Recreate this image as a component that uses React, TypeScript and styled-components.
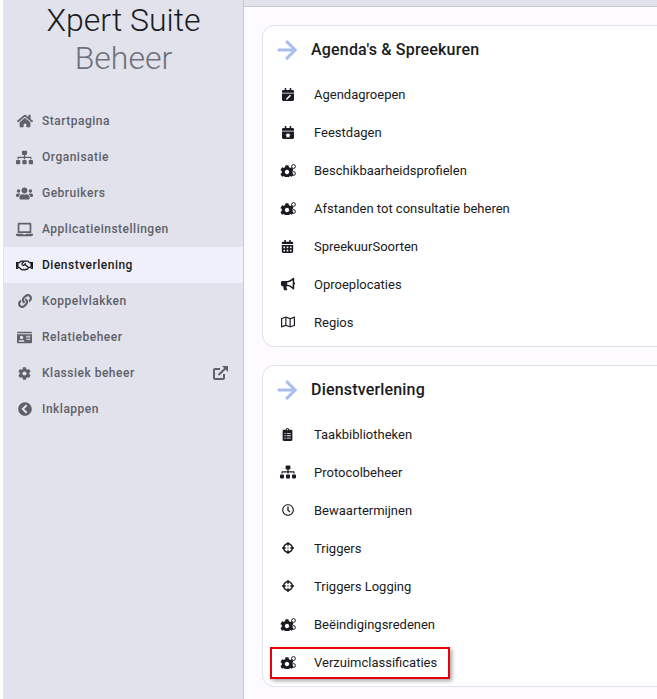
import React from 'react';
import styled, { createGlobalStyle } from 'styled-components';
import {
  FaHome, FaSitemap, FaUsers, FaLaptop, FaRegHandshake, FaLink, FaIdCard, FaCog,
  FaChevronCircleLeft, FaCalendarAlt, FaBullhorn, FaRegMap, FaClipboardList, FaRegClock, FaCrosshairs,
} from 'react-icons/fa';
import { ArrowRight } from 'lucide-react';

const Global = createGlobalStyle`
  html, body { margin: 0; padding: 0; height: 100%; background: #fff; }
  body { font-family: Roboto, "Liberation Sans", sans-serif; overflow: hidden; }
  #root { height: 100%; }
`;

const Page = styled.div`
  display: flex;
  width: 657px;
  height: 699px;
  padding-left: 3px;
  box-sizing: border-box;
  overflow: hidden;
`;

const Sidebar = styled.aside`
  width: 241px;
  flex: none;
  box-sizing: border-box;
  background: #e1e2ec;
  border-right: 1px solid #c8c9d3;
  padding-left: 1px;
`;

const Brand = styled.div`
  height: 103px;
  box-sizing: border-box;
  padding-top: 1px;
  display: flex;
  flex-direction: column;
  align-items: center;
  font-size: 32px;
  line-height: 38px;
  font-weight: 300;
  color: #1a1b22;
`;

const BrandSub = styled.span`
  color: #6f7079;
`;

const Nav = styled.nav`
  display: flex;
  flex-direction: column;
`;

const NavItem = styled.div<{ $active?: boolean }>`
  height: 36px;
  display: flex;
  align-items: center;
  padding: 0 15px 0 12px;
  gap: 9px;
  font-size: 12px;
  font-weight: 500;
  letter-spacing: 0.5px;
  color: ${(p) => (p.$active ? '#1a1b22' : '#5f6068')};
  background: ${(p) => (p.$active ? '#eff0fb' : 'transparent')};
`;

const NavIcon = styled.span<{ $size: number }>`
  width: 17px;
  flex: none;
  display: flex;
  justify-content: center;
  font-size: ${(p) => p.$size}px;
`;

const NavLabel = styled.span`
  flex: 1;
`;

const Main = styled.main`
  flex: 1;
  min-width: 0;
  display: flex;
  flex-direction: column;
  background: #fdfbff;
  overflow: hidden;
`;

const TopBar = styled.div`
  height: 6px;
  flex: none;
  background: #e1e2ec;
  border-bottom: 1px solid #c8c9d3;
`;

const Content = styled.div`
  display: flex;
  flex-direction: column;
  gap: 18px;
  padding: 18px 0 0 18px;
`;

const Card = styled.section`
  width: 440px;
  height: 322px;
  flex: none;
  box-sizing: border-box;
  background: #fff;
  border: 1px solid #e1e2ec;
  border-radius: 12px;
`;

const CardHeader = styled.header`
  height: 47px;
  margin-bottom: 2px;
  display: flex;
  align-items: center;
  gap: 10px;
  padding-left: 10px;
  font-size: 16px;
  font-weight: 500;
  letter-spacing: 0.18px;
  color: #1a1b22;
`;

const Arrow = styled(ArrowRight)`
  color: #a9bff0;
  flex: none;
`;

const Row = styled.div`
  position: relative;
  height: 38px;
  display: flex;
  align-items: center;
  padding-left: 16px;
  font-size: 13px;
  color: #1a1b22;
`;

const RowIcon = styled.span<{ $size: number }>`
  width: 17px;
  flex: none;
  display: flex;
  justify-content: center;
  font-size: ${(p) => p.$size}px;
  margin-right: 18px;
`;

const Highlight = styled.span`
  position: absolute;
  left: 7px;
  top: 4px;
  width: 180px;
  height: 32px;
  box-sizing: border-box;
  border: 2px solid #e8000b;
  box-shadow: 2px 2px 4px rgba(0, 0, 0, 0.35);
  pointer-events: none;
`;

const ExternalIcon = () => (
  <svg width="15" height="14" viewBox="0 0 15 14" fill="none" stroke="currentColor">
    <path d="M7 3H2C1.4 3 1 3.4 1 4v8c0 .6.4 1 1 1h8c.6 0 1-.4 1-1V8" strokeWidth="2" />
    <path d="M5.5 9 13 1.8" strokeWidth="2" />
    <path d="M9 0h6v6z" fill="currentColor" stroke="none" />
  </svg>
);

const CalendarGlyph = ({ mark }: { mark: 'edit' | 'star' }) => (
  <svg width="12" height="13" viewBox="0 0 13 14" fill="currentColor">
    <path d="M3 0h1.6v2h3.8V0H10v2h1.5C12.3 2 13 2.7 13 3.5V5H0V3.5C0 2.7.7 2 1.5 2H3zM0 6h13v6.5c0 .8-.7 1.5-1.5 1.5h-10C.7 14 0 13.3 0 12.5z" />
    {mark === 'edit' ? (
      <path d="M8.6 7.2l1.2 1.2-4 4-1.6.4.4-1.6z" fill="#fff" />
    ) : (
      <path d="M6.5 7.2l.9 1.8 2 .3-1.45 1.4.35 2-1.8-.95-1.8.95.35-2L3.6 9.3l2-.3z" fill="#fff" />
    )}
  </svg>
);

const GearsGlyph = () => (
  <svg width="16" height="14" viewBox="0 0 16 14" fill="none" stroke="currentColor">
    <FaCog x={0} y={2} width={10} height={10} fill="currentColor" stroke="none" />
    <circle cx="13.5" cy="3.5" r="1.9" strokeWidth="1" />
    <circle cx="13.5" cy="10.5" r="1.9" strokeWidth="1" />
  </svg>
);

const navItems: { label: string; icon: React.ReactNode; size: number; active?: boolean; external?: boolean }[] = [
  { label: 'Startpagina', icon: <FaHome />, size: 16 },
  { label: 'Organisatie', icon: <FaSitemap />, size: 17 },
  { label: 'Gebruikers', icon: <FaUsers />, size: 17 },
  { label: 'Applicatieinstellingen', icon: <FaLaptop />, size: 17 },
  { label: 'Dienstverlening', icon: <FaRegHandshake />, size: 17, active: true },
  { label: 'Koppelvlakken', icon: <FaLink />, size: 14 },
  { label: 'Relatiebeheer', icon: <FaIdCard />, size: 15 },
  { label: 'Klassiek beheer', icon: <FaCog />, size: 13, external: true },
  { label: 'Inklappen', icon: <FaChevronCircleLeft />, size: 14 },
];

type RowData = [string, React.ReactNode, number];

const agenda: RowData[] = [
  ['Agendagroepen', <CalendarGlyph mark="edit" />, 14],
  ['Feestdagen', <CalendarGlyph mark="star" />, 14],
  ['Beschikbaarheidsprofielen', <GearsGlyph />, 14],
  ['Afstanden tot consultatie beheren', <GearsGlyph />, 14],
  ['SpreekuurSoorten', <FaCalendarAlt />, 13],
  ['Oproeplocaties', <FaBullhorn />, 14],
  ['Regios', <FaRegMap />, 14],
];

const services: RowData[] = [
  ['Taakbibliotheken', <FaClipboardList />, 13],
  ['Protocolbeheer', <FaSitemap />, 16],
  ['Bewaartermijnen', <FaRegClock />, 12],
  ['Triggers', <FaCrosshairs />, 12],
  ['Triggers Logging', <FaCrosshairs />, 12],
  ['Beëindigingsredenen', <GearsGlyph />, 14],
  ['Verzuimclassificaties', <GearsGlyph />, 14],
];

const Section = ({ title, rows, marked }: { title: string; rows: RowData[]; marked?: string }) => (
  <Card>
    <CardHeader>
      <Arrow size={28} strokeWidth={2.6} />
      {title}
    </CardHeader>
    {rows.map(([label, icon, size]) => (
      <Row key={label}>
        <RowIcon $size={size}>{icon}</RowIcon>
        {label}
        {marked === label && <Highlight />}
      </Row>
    ))}
  </Card>
);

export default function App() {
  return (
    <Page>
      <Global />
      <Sidebar>
        <Brand>
          <span>Xpert Suite</span>
          <BrandSub>Beheer</BrandSub>
        </Brand>
        <Nav>
          {navItems.map((n) => (
            <NavItem key={n.label} $active={n.active}>
              <NavIcon $size={n.size}>{n.icon}</NavIcon>
              <NavLabel>{n.label}</NavLabel>
              {n.external && <ExternalIcon />}
            </NavItem>
          ))}
        </Nav>
      </Sidebar>
      <Main>
        <TopBar />
        <Content>
          <Section title="Agenda's & Spreekuren" rows={agenda} />
          <Section title="Dienstverlening" rows={services} marked="Verzuimclassificaties" />
        </Content>
      </Main>
    </Page>
  );
}
